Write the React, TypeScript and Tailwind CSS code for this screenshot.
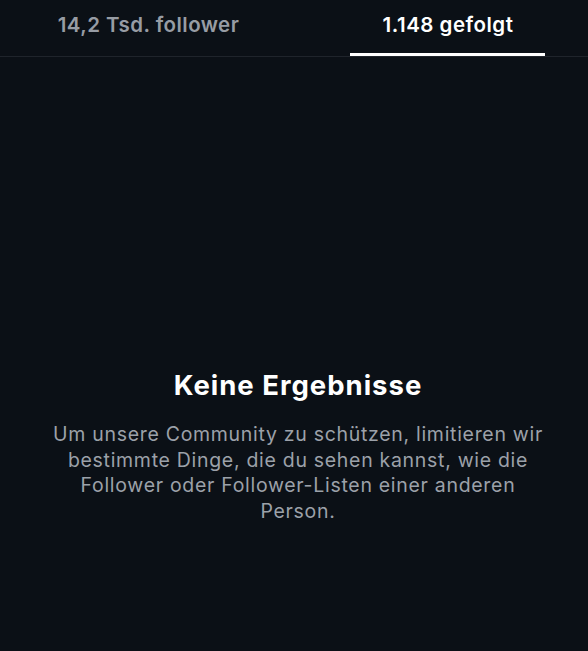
export default function App() {
  return (
    <div className="w-[588px] h-[651px] bg-[#0b1016] overflow-hidden flex flex-col" style={{ fontFamily: 'Inter, "Noto Sans", sans-serif' }}>
      {/* Tabs */}
      <div className="flex h-[57px] border-b border-[#1f242b] shrink-0">
        <div className="w-[297px] shrink-0 flex items-center justify-center pb-[5px] text-[20.5px] tracking-[0.45px] font-semibold text-[#979ca4]">
          14,2 Tsd. follower
        </div>
        <div className="w-[300px] shrink-0 flex flex-col items-center justify-end">
          <div className="flex-1 flex items-center pb-[2px] pl-[2px] text-[20.5px] tracking-[0.5px] font-semibold text-white">
            1.148 gefolgt
          </div>
          <div className="w-[195px] h-[3px] bg-white" />
        </div>
      </div>

      {/* Empty state */}
      <div className="flex flex-col items-center text-center pt-[310px] pl-[48px] pr-[40px]">
        <h1 className="text-[27.5px] tracking-[1px] font-bold text-white leading-[36px]">Keine Ergebnisse</h1>
        <p className="mt-[19px] text-[19.5px] tracking-[0.7px] leading-[25.5px] text-[#9ca1a9]">
          Um unsere Community zu schützen, limitieren wir bestimmte Dinge, die du sehen kannst, wie die Follower oder Follower-Listen einer anderen Person.
        </p>
      </div>
    </div>
  )
}
